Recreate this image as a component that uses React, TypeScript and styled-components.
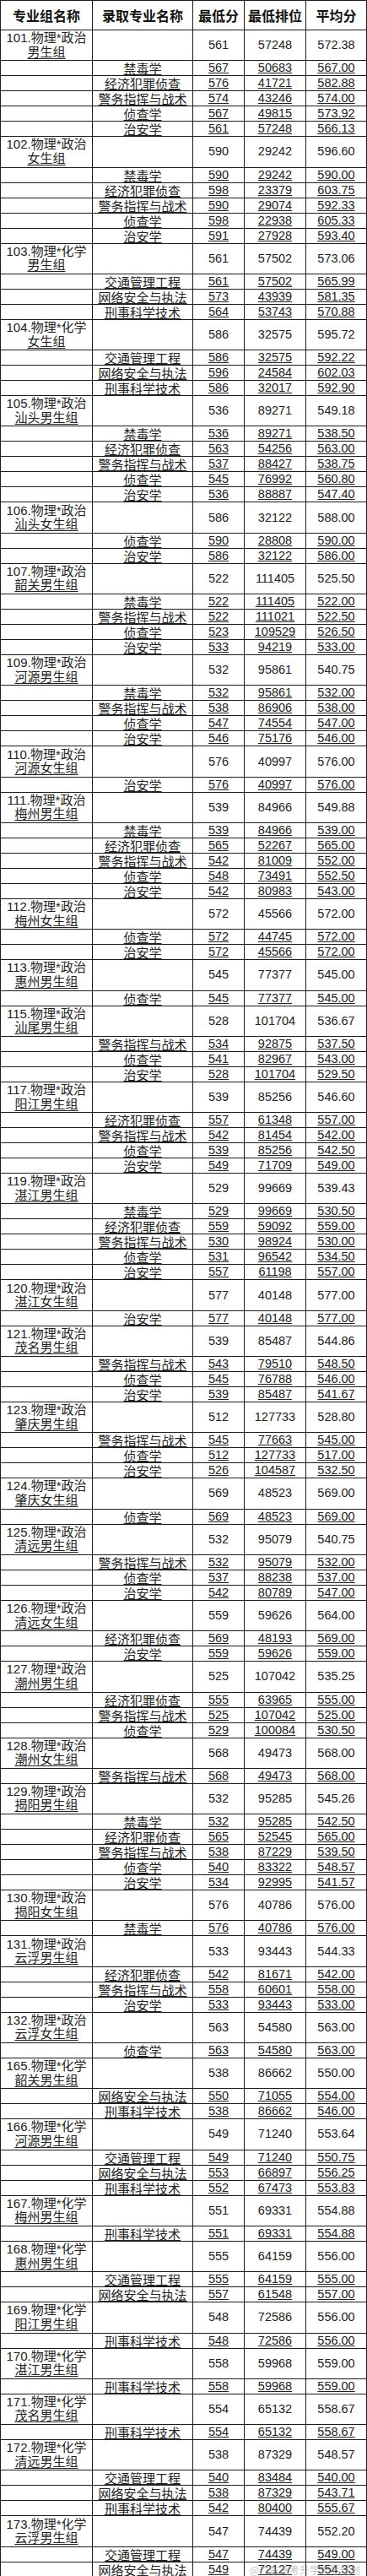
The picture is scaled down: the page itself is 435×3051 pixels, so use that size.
import React from "react";
import styled, { createGlobalStyle } from "styled-components";

const GlobalStyle = createGlobalStyle`
  html, body {
    margin: 0;
    padding: 0;
    background: #ffffff;
  }
  body {
    font-family: "Liberation Sans", "Noto Sans CJK SC", sans-serif;
    color: #111;
  }
`;

const COLS = "110px 119px 61px 73px 72px";
const LINE = "#1c1c1c";

const Sheet = styled.div`
  position: relative;
  width: 435px;
  display: flex;
  flex-direction: column;
`;

const Row = styled.div<{ $h: number; $top?: boolean }>`
  display: grid;
  grid-template-columns: ${COLS};
  height: ${(p) => p.$h}px;
  box-sizing: border-box;
  ${(p) => (p.$top ? `border-top: 1px solid ${LINE};` : "")}
`;

const Cell = styled.div<{ $first?: boolean; $low?: boolean }>`
  box-sizing: border-box;
  min-width: 0;
  border-right: 1px solid ${LINE};
  border-bottom: 1px solid ${LINE};
  ${(p) => (p.$first ? `border-left: 1px solid ${LINE};` : "")}
  display: flex;
  align-items: ${(p) => (p.$low ? "flex-end" : "center")};
  justify-content: center;
  white-space: nowrap;
`;

const HeadText = styled.span`
  font-family: "Noto Sans CJK SC", sans-serif;
  font-weight: 700;
  font-size: 16px;
  line-height: 20px;
  color: #111;
`;

const GroupName = styled.div`
  display: flex;
  flex-direction: column;
  align-items: center;
  font-family: "Liberation Sans", "Noto Sans CJK SC", sans-serif;
  font-size: 15px;
  line-height: 16.5px;
  color: #222;
`;

const GroupSecond = styled.span`
  text-decoration: underline;
  text-underline-offset: 2px;
  text-decoration-thickness: 1px;
`;

const Num = styled.span<{ $u?: boolean }>`
  font-family: "Liberation Sans", sans-serif;
  font-size: 14.5px;
  line-height: 17px;
  color: #222;
  ${(p) =>
    p.$u
      ? `text-decoration: underline; text-underline-offset: 1px; text-decoration-thickness: 1px;`
      : ""}
`;

const Major = styled.span`
  font-family: "Noto Sans CJK SC", sans-serif;
  font-size: 15px;
  line-height: 17px;
  color: #222;
  text-decoration: underline;
  text-underline-offset: 1px;
  text-decoration-thickness: 1px;
`;

const Watermark = styled.div`
  position: absolute;
  right: 8px;
  bottom: 3px;
  font-family: "Noto Sans CJK SC", sans-serif;
  font-size: 12px;
  line-height: 13px;
  color: rgba(140, 140, 140, 0.55);
  pointer-events: none;
`;

type Item = [string, string, string, string];
type Group = {
  id: string;
  subj: string;
  name: string;
  min: string;
  rank: string;
  avg: string;
  items: Item[];
};

const Z = "物理*政治";
const H = "物理*化学";

const groups: Group[] = [
  { id: "101", subj: Z, name: "男生组", min: "561", rank: "57248", avg: "572.38", items: [
    ["禁毒学", "567", "50683", "567.00"],
    ["经济犯罪侦查", "576", "41721", "582.88"],
    ["警务指挥与战术", "574", "43246", "574.00"],
    ["侦查学", "567", "49815", "573.92"],
    ["治安学", "561", "57248", "566.13"],
  ] },
  { id: "102", subj: Z, name: "女生组", min: "590", rank: "29242", avg: "596.60", items: [
    ["禁毒学", "590", "29242", "590.00"],
    ["经济犯罪侦查", "598", "23379", "603.75"],
    ["警务指挥与战术", "590", "29074", "592.33"],
    ["侦查学", "598", "22938", "605.33"],
    ["治安学", "591", "27928", "593.40"],
  ] },
  { id: "103", subj: H, name: "男生组", min: "561", rank: "57502", avg: "573.06", items: [
    ["交通管理工程", "561", "57502", "565.99"],
    ["网络安全与执法", "573", "43939", "581.35"],
    ["刑事科学技术", "564", "53743", "570.88"],
  ] },
  { id: "104", subj: H, name: "女生组", min: "586", rank: "32575", avg: "595.72", items: [
    ["交通管理工程", "586", "32575", "592.22"],
    ["网络安全与执法", "596", "24584", "602.03"],
    ["刑事科学技术", "586", "32017", "592.90"],
  ] },
  { id: "105", subj: Z, name: "汕头男生组", min: "536", rank: "89271", avg: "549.18", items: [
    ["禁毒学", "536", "89271", "538.50"],
    ["经济犯罪侦查", "563", "54256", "563.00"],
    ["警务指挥与战术", "537", "88427", "538.75"],
    ["侦查学", "545", "76992", "560.80"],
    ["治安学", "536", "88887", "547.40"],
  ] },
  { id: "106", subj: Z, name: "汕头女生组", min: "586", rank: "32122", avg: "588.00", items: [
    ["侦查学", "590", "28808", "590.00"],
    ["治安学", "586", "32122", "586.00"],
  ] },
  { id: "107", subj: Z, name: "韶关男生组", min: "522", rank: "111405", avg: "525.50", items: [
    ["禁毒学", "522", "111405", "522.00"],
    ["警务指挥与战术", "522", "111021", "522.50"],
    ["侦查学", "523", "109529", "526.50"],
    ["治安学", "533", "94219", "533.00"],
  ] },
  { id: "109", subj: Z, name: "河源男生组", min: "532", rank: "95861", avg: "540.75", items: [
    ["禁毒学", "532", "95861", "532.00"],
    ["警务指挥与战术", "538", "86906", "538.00"],
    ["侦查学", "547", "74554", "547.00"],
    ["治安学", "546", "75176", "546.00"],
  ] },
  { id: "110", subj: Z, name: "河源女生组", min: "576", rank: "40997", avg: "576.00", items: [
    ["治安学", "576", "40997", "576.00"],
  ] },
  { id: "111", subj: Z, name: "梅州男生组", min: "539", rank: "84966", avg: "549.88", items: [
    ["禁毒学", "539", "84966", "539.00"],
    ["经济犯罪侦查", "565", "52267", "565.00"],
    ["警务指挥与战术", "542", "81009", "552.00"],
    ["侦查学", "548", "73491", "552.50"],
    ["治安学", "542", "80983", "543.00"],
  ] },
  { id: "112", subj: Z, name: "梅州女生组", min: "572", rank: "45566", avg: "572.00", items: [
    ["侦查学", "572", "44745", "572.00"],
    ["治安学", "572", "45566", "572.00"],
  ] },
  { id: "113", subj: Z, name: "惠州男生组", min: "545", rank: "77377", avg: "545.00", items: [
    ["侦查学", "545", "77377", "545.00"],
  ] },
  { id: "115", subj: Z, name: "汕尾男生组", min: "528", rank: "101704", avg: "536.67", items: [
    ["警务指挥与战术", "534", "92875", "537.50"],
    ["侦查学", "541", "82967", "543.00"],
    ["治安学", "528", "101704", "529.50"],
  ] },
  { id: "117", subj: Z, name: "阳江男生组", min: "539", rank: "85256", avg: "546.60", items: [
    ["经济犯罪侦查", "557", "61348", "557.00"],
    ["警务指挥与战术", "542", "81454", "542.00"],
    ["侦查学", "539", "85256", "542.50"],
    ["治安学", "549", "71709", "549.00"],
  ] },
  { id: "119", subj: Z, name: "湛江男生组", min: "529", rank: "99669", avg: "539.43", items: [
    ["禁毒学", "529", "99669", "530.50"],
    ["经济犯罪侦查", "559", "59092", "559.00"],
    ["警务指挥与战术", "530", "98924", "530.00"],
    ["侦查学", "531", "96542", "534.50"],
    ["治安学", "557", "61198", "557.00"],
  ] },
  { id: "120", subj: Z, name: "湛江女生组", min: "577", rank: "40148", avg: "577.00", items: [
    ["治安学", "577", "40148", "577.00"],
  ] },
  { id: "121", subj: Z, name: "茂名男生组", min: "539", rank: "85487", avg: "544.86", items: [
    ["警务指挥与战术", "543", "79510", "548.50"],
    ["侦查学", "545", "76788", "546.00"],
    ["治安学", "539", "85487", "541.67"],
  ] },
  { id: "123", subj: Z, name: "肇庆男生组", min: "512", rank: "127733", avg: "528.80", items: [
    ["警务指挥与战术", "545", "77663", "545.00"],
    ["侦查学", "512", "127733", "517.00"],
    ["治安学", "526", "104587", "532.50"],
  ] },
  { id: "124", subj: Z, name: "肇庆女生组", min: "569", rank: "48523", avg: "569.00", items: [
    ["侦查学", "569", "48523", "569.00"],
  ] },
  { id: "125", subj: Z, name: "清远男生组", min: "532", rank: "95079", avg: "540.75", items: [
    ["警务指挥与战术", "532", "95079", "532.00"],
    ["侦查学", "537", "88238", "537.00"],
    ["治安学", "542", "80789", "547.00"],
  ] },
  { id: "126", subj: Z, name: "清远女生组", min: "559", rank: "59626", avg: "564.00", items: [
    ["经济犯罪侦查", "569", "48193", "569.00"],
    ["治安学", "559", "59626", "559.00"],
  ] },
  { id: "127", subj: Z, name: "潮州男生组", min: "525", rank: "107042", avg: "535.25", items: [
    ["经济犯罪侦查", "555", "63965", "555.00"],
    ["警务指挥与战术", "525", "107042", "525.00"],
    ["侦查学", "529", "100084", "530.50"],
  ] },
  { id: "128", subj: Z, name: "潮州女生组", min: "568", rank: "49473", avg: "568.00", items: [
    ["警务指挥与战术", "568", "49473", "568.00"],
  ] },
  { id: "129", subj: Z, name: "揭阳男生组", min: "532", rank: "95285", avg: "545.26", items: [
    ["禁毒学", "532", "95285", "542.50"],
    ["经济犯罪侦查", "565", "52545", "565.00"],
    ["警务指挥与战术", "538", "87229", "539.50"],
    ["侦查学", "540", "83322", "548.57"],
    ["治安学", "534", "92995", "541.57"],
  ] },
  { id: "130", subj: Z, name: "揭阳女生组", min: "576", rank: "40786", avg: "576.00", items: [
    ["禁毒学", "576", "40786", "576.00"],
  ] },
  { id: "131", subj: Z, name: "云浮男生组", min: "533", rank: "93443", avg: "544.33", items: [
    ["经济犯罪侦查", "542", "81671", "542.00"],
    ["警务指挥与战术", "558", "60601", "558.00"],
    ["治安学", "533", "93443", "533.00"],
  ] },
  { id: "132", subj: Z, name: "云浮女生组", min: "563", rank: "54580", avg: "563.00", items: [
    ["侦查学", "563", "54580", "563.00"],
  ] },
  { id: "165", subj: H, name: "韶关男生组", min: "538", rank: "86662", avg: "550.00", items: [
    ["网络安全与执法", "550", "71055", "554.00"],
    ["刑事科学技术", "538", "86662", "546.00"],
  ] },
  { id: "166", subj: H, name: "河源男生组", min: "549", rank: "71240", avg: "553.64", items: [
    ["交通管理工程", "549", "71240", "550.75"],
    ["网络安全与执法", "553", "66897", "556.25"],
    ["刑事科学技术", "552", "67473", "553.83"],
  ] },
  { id: "167", subj: H, name: "梅州男生组", min: "551", rank: "69331", avg: "554.88", items: [
    ["刑事科学技术", "551", "69331", "554.88"],
  ] },
  { id: "168", subj: H, name: "惠州男生组", min: "555", rank: "64159", avg: "556.00", items: [
    ["交通管理工程", "555", "64159", "555.00"],
    ["网络安全与执法", "557", "61548", "557.00"],
  ] },
  { id: "169", subj: H, name: "阳江男生组", min: "548", rank: "72586", avg: "556.00", items: [
    ["刑事科学技术", "548", "72586", "556.00"],
  ] },
  { id: "170", subj: H, name: "湛江男生组", min: "558", rank: "59968", avg: "559.00", items: [
    ["刑事科学技术", "558", "59968", "559.00"],
  ] },
  { id: "171", subj: H, name: "茂名男生组", min: "554", rank: "65132", avg: "558.67", items: [
    ["刑事科学技术", "554", "65132", "558.67"],
  ] },
  { id: "172", subj: H, name: "清远男生组", min: "538", rank: "87329", avg: "548.57", items: [
    ["交通管理工程", "540", "83484", "540.00"],
    ["网络安全与执法", "538", "87329", "543.71"],
    ["刑事科学技术", "542", "80400", "555.67"],
  ] },
  { id: "173", subj: H, name: "云浮男生组", min: "547", rank: "74439", avg: "552.20", items: [
    ["交通管理工程", "547", "74439", "549.00"],
    ["网络安全与执法", "549", "72127", "554.33"],
  ] },
];

const headers = ["专业组名称", "录取专业名称", "最低分", "最低排位", "平均分"];

function GroupBlock({ g }: { g: Group }) {
  return (
    <>
      <Row $h={36.3}>
        <Cell $first>
          <GroupName>
            <span>{`${g.id}.${g.subj}`}</span>
            <GroupSecond>{g.name}</GroupSecond>
          </GroupName>
        </Cell>
        <Cell />
        <Cell><Num>{g.min}</Num></Cell>
        <Cell><Num>{g.rank}</Num></Cell>
        <Cell><Num>{g.avg}</Num></Cell>
      </Row>
      {g.items.map((it, i) => (
        <Row $h={18} key={i}>
          <Cell $first />
          <Cell $low><Major>{it[0]}</Major></Cell>
          <Cell $low><Num $u>{it[1]}</Num></Cell>
          <Cell $low><Num $u>{it[2]}</Num></Cell>
          <Cell $low><Num $u>{it[3]}</Num></Cell>
        </Row>
      ))}
    </>
  );
}

export default function App() {
  return (
    <>
      <GlobalStyle />
      <Sheet>
        <Row $h={36} $top>
          {headers.map((h, i) => (
            <Cell key={h} $first={i === 0}>
              <HeadText>{h}</HeadText>
            </Cell>
          ))}
        </Row>
        {groups.map((g) => (
          <GroupBlock key={g.id} g={g} />
        ))}
        <Watermark>@广东高考升学志愿规划</Watermark>
      </Sheet>
    </>
  );
}
